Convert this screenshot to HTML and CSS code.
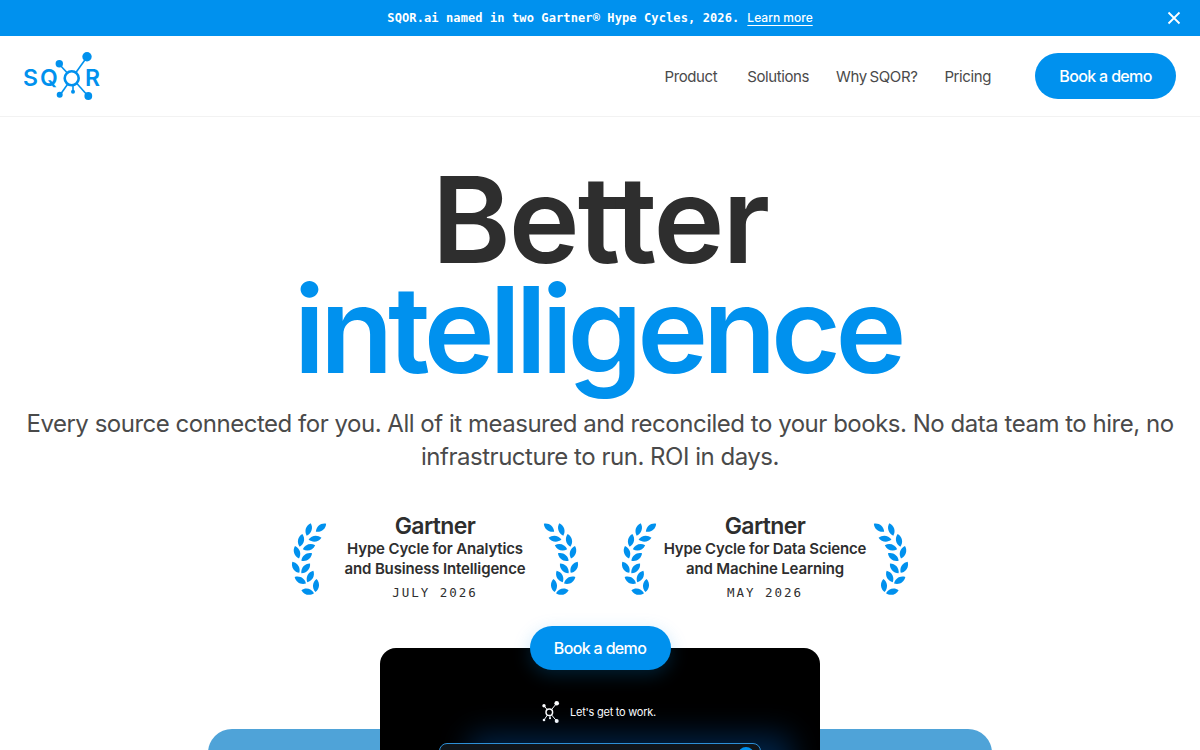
FILE: index.html
```html
<!DOCTYPE html>
<html lang="en">
<head>
    <meta charset="UTF-8">
    <meta name="viewport" content="width=device-width, initial-scale=1.0">
    <title>SQOR.ai</title>
    <link rel="stylesheet" href="styles.css">
</head>
<body>
    <!-- Leaf shape shared by all four laurels -->
    <svg class="defs" width="0" height="0">
        <symbol id="leaf" overflow="visible">
            <path d="M-6.5 0C-3 -4 3 -4 6.5 0C3 4 -3 4 -6.5 0Z"/>
        </symbol>
        <symbol id="laurel" viewBox="0 0 36 74">
            <g fill="#0091ee">
                <use href="#leaf" transform="translate(30 4.7) rotate(-38)"/>
                <use href="#leaf" transform="translate(17.7 6.5) rotate(-72)"/>
                <use href="#leaf" transform="translate(24 15.7) rotate(-8)"/>
                <use href="#leaf" transform="translate(10 17.3) rotate(-78)"/>
                <use href="#leaf" transform="translate(18 24.3) rotate(-18)"/>
                <use href="#leaf" transform="translate(6 29.3) rotate(72)"/>
                <use href="#leaf" transform="translate(15.7 34) rotate(-35)"/>
                <use href="#leaf" transform="translate(4.8 44.3) rotate(58)"/>
                <use href="#leaf" transform="translate(14.7 45.3) rotate(-48)"/>
                <use href="#leaf" transform="translate(9.3 57.3) rotate(30)"/>
                <use href="#leaf" transform="translate(19.3 53.5) rotate(-62)"/>
                <use href="#leaf" transform="translate(16.7 68.7) rotate(14)"/>
                <use href="#leaf" transform="translate(25 62.5) rotate(-85)"/>
            </g>
        </symbol>
    </svg>

    <div class="page">
        <div class="banner">
            <p class="banner-text">SQOR.ai named in two Gartner® Hype Cycles, 2026.<a class="banner-link" href="#">Learn more</a></p>
            <button class="banner-close" aria-label="Close">
                <svg width="14" height="14" viewBox="0 0 14 14" fill="none" stroke="#fff" stroke-width="1.8"><path d="M1.5 1.5l11 11M12.5 1.5l-11 11"/></svg>
            </button>
        </div>

        <header class="nav">
            <a class="logo" href="#" aria-label="SQOR">
                <svg width="78" height="50" viewBox="0 0 78 50">
                    <g stroke="#0091ee" stroke-width="1.6" fill="none">
                        <path d="M48 26L63 5"/>
                        <path d="M48 26L35 12"/>
                        <path d="M48 26L36 43"/>
                        <path d="M49 33L49 40"/>
                        <path d="M48 26L64 44"/>
                        <circle cx="47.7" cy="26.3" r="7" stroke-width="2.6" fill="#fff"/>
                    </g>
                    <g fill="#0091ee">
                        <circle cx="63" cy="4.7" r="4.7"/>
                        <circle cx="35.3" cy="11.7" r="3.7"/>
                        <circle cx="35.7" cy="42.7" r="3"/>
                        <circle cx="49" cy="39.7" r="2"/>
                        <circle cx="64.3" cy="44" r="3.9"/>
                        <text class="logo-text" x="-1" y="34">SQ</text>
                        <text class="logo-text" x="61" y="34">R</text>
                    </g>
                </svg>
            </a>
            <nav class="nav-links">
                <a href="#">Product</a>
                <a href="#">Solutions</a>
                <a href="#">Why SQOR?</a>
                <a href="#">Pricing</a>
            </nav>
            <a class="btn btn-nav" href="#">Book a demo</a>
        </header>

        <main class="hero">
            <h1 class="hero-title">Better<span class="hero-accent">intelligence</span></h1>
            <p class="hero-sub">Every source connected for you. All of it measured and reconciled to your books. No data team to hire, no infrastructure to run. ROI in days.</p>

            <div class="awards">
                <div class="award">
                    <svg class="laurel"><use href="#laurel"/></svg>
                    <div class="award-text">
                        <div class="award-brand">Gartner</div>
                        <div class="award-name">Hype Cycle for Analytics<br>and Business Intelligence</div>
                        <div class="award-date">JULY 2026</div>
                    </div>
                    <svg class="laurel laurel-right"><use href="#laurel"/></svg>
                </div>
                <div class="award">
                    <svg class="laurel"><use href="#laurel"/></svg>
                    <div class="award-text">
                        <div class="award-brand">Gartner</div>
                        <div class="award-name">Hype Cycle for Data Science<br>and Machine Learning</div>
                        <div class="award-date">MAY 2026</div>
                    </div>
                    <svg class="laurel laurel-right"><use href="#laurel"/></svg>
                </div>
            </div>

            <a class="btn btn-hero" href="#">Book a demo</a>

            <div class="stage">
                <div class="stage-back"></div>
                <div class="stage-panel">
                    <div class="panel-head">
                        <svg width="20" height="24" viewBox="0 0 20 24" fill="none" stroke="#fff" stroke-width="1">
                            <path d="M9.3 12.3L16.7 3.3M9.3 12.3L4 5.7M9.3 12.3L4 20M9.3 12.3L16.7 21M10 16L10 18.3"/>
                            <circle cx="9.3" cy="12.3" r="3.3" fill="#000" stroke-width="1.5"/>
                            <g fill="#fff" stroke="none">
                                <circle cx="16.7" cy="3.3" r="2.3"/>
                                <circle cx="4" cy="5.7" r="1.7"/>
                                <circle cx="4" cy="20" r="1.3"/>
                                <circle cx="10" cy="18.3" r="1"/>
                                <circle cx="16.7" cy="21" r="2"/>
                            </g>
                        </svg>
                        <span>Let's get to work.</span>
                    </div>
                    <div class="panel-input"><span class="panel-send"></span></div>
                </div>
            </div>
        </main>
    </div>
</body>
</html>
```

FILE: styles.css
```css
* {
    box-sizing: border-box;
}

body {
    margin: 0;
    font-family: Inter, "Open Sans", sans-serif;
    color: #2e2e2e;
    background-color: #fff;
}

a {
    color: inherit;
    text-decoration: none;
}

.defs {
    display: block;
    height: 0;
}

.page {
    height: 750px;
    overflow: hidden;
}

/* Top banner */
.banner {
    display: flex;
    align-items: center;
    justify-content: center;
    position: relative;
    height: 36px;
    padding-bottom: 2px;
    background-color: #0091ee;
    color: #fff;
}

.banner-text {
    margin: 0;
    font-family: "DejaVu Sans Mono", monospace;
    font-size: 12px;
    font-weight: bold;
    letter-spacing: 0.11px;
}

.banner-link {
    margin-left: 8px;
    font-family: Inter, sans-serif;
    font-size: 12px;
    font-weight: 500;
    letter-spacing: 0;
    text-decoration: underline;
    text-underline-offset: 3px;
}

.banner-close {
    position: absolute;
    right: 19px;
    top: 11px;
    padding: 0;
    display: flex;
    border: none;
    background: none;
}

/* Nav */
.nav {
    display: flex;
    align-items: center;
    height: 81px;
    padding: 0 24px;
    border-bottom: 1px solid #f2f2f2;
}

.logo {
    display: flex;
    margin-top: 1px;
}

.logo-text {
    font-family: Inter, sans-serif;
    font-size: 23px;
    font-weight: 600;
    letter-spacing: 2px;
}

.nav-links {
    display: flex;
    gap: 27px;
    margin-left: auto;
    margin-right: 44px;
    font-size: 15px;
    letter-spacing: -0.4px;
    word-spacing: -1px;
    color: #4a4a4a;
}

.nav-links a:first-child {
    margin-right: 3px;
}

.btn {
    display: flex;
    align-items: center;
    justify-content: center;
    background-color: #0091ee;
    color: #fff;
    font-size: 16px;
    font-weight: 500;
    letter-spacing: -0.65px;
    border-radius: 23px;
}

.btn-nav {
    width: 141px;
    height: 46px;
}

/* Hero */
.hero {
    display: flex;
    flex-direction: column;
    align-items: center;
}

.hero-title {
    margin: 48px 0 0;
    font-size: 120px;
    font-weight: 600;
    line-height: 110px;
    letter-spacing: -2px;
    text-align: center;
}

.hero-accent {
    display: block;
    padding-right: 5px;
    color: #0091ee;
    letter-spacing: -5.35px;
}

.hero-sub {
    width: 1170px;
    margin: 22px 0 0;
    font-size: 24px;
    line-height: 33px;
    letter-spacing: -0.48px;
    color: #4a4a4a;
    text-align: center;
}

.awards {
    display: flex;
    gap: 42px;
    margin-top: 40px;
}

.award {
    display: flex;
    align-items: center;
    gap: 6px;
}

.laurel {
    width: 36px;
    height: 74px;
    margin-top: 5px;
}

.laurel-right {
    transform: scaleX(-1);
}

.award-text {
    display: flex;
    flex-direction: column;
    align-items: center;
    width: 204px;
    text-align: center;
}

.award-brand {
    font-size: 23px;
    font-weight: 600;
    line-height: 26px;
    letter-spacing: -0.6px;
}

.award-name {
    font-size: 15px;
    font-weight: 600;
    line-height: 20px;
    letter-spacing: -0.15px;
}

.award-date {
    margin-top: 6px;
    font-family: "DejaVu Sans Mono", monospace;
    font-size: 12.5px;
    line-height: 16px;
    letter-spacing: 2px;
}

.btn-hero {
    position: relative;
    z-index: 2;
    width: 141px;
    height: 44px;
    margin-top: 25px;
    margin-bottom: -22px;
    box-shadow: 0 5px 18px rgba(0, 145, 238, 0.22);
}

/* Product preview */
.stage {
    display: grid;
    justify-items: center;
    width: 784px;
}

.stage-back,
.stage-panel {
    grid-area: 1 / 1;
}

.stage-back {
    width: 784px;
    height: 200px;
    margin-top: 81px;
    background-color: #4fa3d8;
    border-radius: 24px;
}

.stage-panel {
    position: relative;
    width: 440px;
    height: 300px;
    padding-top: 52px;
    background-color: #000;
    border-radius: 16px;
    overflow: hidden;
}

.panel-head {
    display: flex;
    align-items: center;
    justify-content: center;
    gap: 10px;
    padding-right: 4px;
    font-size: 11px;
    letter-spacing: -0.25px;
    color: #fff;
}

.panel-input {
    position: relative;
    width: 322px;
    height: 80px;
    margin: 19px auto 0;
    background-color: #10151a;
    border: 1px solid #2d8fd6;
    border-radius: 8px;
    box-shadow: 30px -8px 30px rgba(0, 110, 220, 0.32);
}

.panel-send {
    position: absolute;
    top: 3px;
    right: 6px;
    width: 16px;
    height: 16px;
    background-color: #0091ee;
    border-radius: 50%;
}
```
